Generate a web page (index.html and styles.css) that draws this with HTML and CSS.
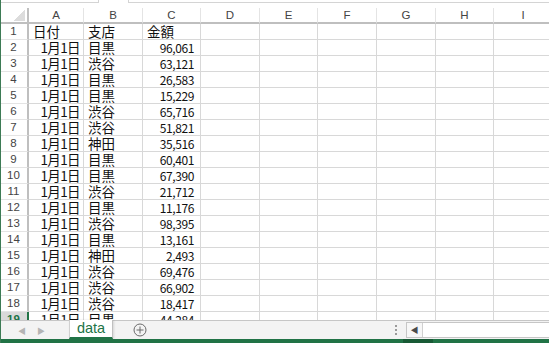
FILE: index.html
```html
<!DOCTYPE html>
<html lang="ja">
<head>
    <meta charset="UTF-8">
    <title>data - Excel</title>
    <link rel="stylesheet" href="styles.css">
</head>
<body>
    <div class="window">
        <div class="formula-strip">
            <div class="name-box"></div>
            <div class="fx-gap"></div>
            <div class="formula-box"></div>
        </div>
        <div class="sheet">
            <table class="grid">
                <colgroup>
                    <col class="c-row">
                    <col class="c-a">
                    <col class="c-b">
                    <col class="c-c">
                    <col class="c-d"><col class="c-e"><col class="c-f">
                    <col class="c-g"><col class="c-h"><col class="c-i">
                </colgroup>
                <thead>
                    <tr>
                        <th class="corner"></th>
                        <th>A</th><th>B</th><th>C</th><th>D</th><th>E</th>
                        <th>F</th><th>G</th><th>H</th><th>I</th>
                    </tr>
                </thead>
                <tbody>
                    <tr><th>1</th><td>日付</td><td>支店</td><td>金額</td><td></td><td></td><td></td><td></td><td></td><td></td></tr>
                    <tr><th>2</th><td class="date">1月1日</td><td>目黒</td><td class="num">96,061</td><td></td><td></td><td></td><td></td><td></td><td></td></tr>
                    <tr><th>3</th><td class="date">1月1日</td><td>渋谷</td><td class="num">63,121</td><td></td><td></td><td></td><td></td><td></td><td></td></tr>
                    <tr><th>4</th><td class="date">1月1日</td><td>目黒</td><td class="num">26,583</td><td></td><td></td><td></td><td></td><td></td><td></td></tr>
                    <tr><th>5</th><td class="date">1月1日</td><td>目黒</td><td class="num">15,229</td><td></td><td></td><td></td><td></td><td></td><td></td></tr>
                    <tr><th>6</th><td class="date">1月1日</td><td>渋谷</td><td class="num">65,716</td><td></td><td></td><td></td><td></td><td></td><td></td></tr>
                    <tr><th>7</th><td class="date">1月1日</td><td>渋谷</td><td class="num">51,821</td><td></td><td></td><td></td><td></td><td></td><td></td></tr>
                    <tr><th>8</th><td class="date">1月1日</td><td>神田</td><td class="num">35,516</td><td></td><td></td><td></td><td></td><td></td><td></td></tr>
                    <tr><th>9</th><td class="date">1月1日</td><td>目黒</td><td class="num">60,401</td><td></td><td></td><td></td><td></td><td></td><td></td></tr>
                    <tr><th>10</th><td class="date">1月1日</td><td>目黒</td><td class="num">67,390</td><td></td><td></td><td></td><td></td><td></td><td></td></tr>
                    <tr><th>11</th><td class="date">1月1日</td><td>渋谷</td><td class="num">21,712</td><td></td><td></td><td></td><td></td><td></td><td></td></tr>
                    <tr><th>12</th><td class="date">1月1日</td><td>目黒</td><td class="num">11,176</td><td></td><td></td><td></td><td></td><td></td><td></td></tr>
                    <tr><th>13</th><td class="date">1月1日</td><td>渋谷</td><td class="num">98,395</td><td></td><td></td><td></td><td></td><td></td><td></td></tr>
                    <tr><th>14</th><td class="date">1月1日</td><td>目黒</td><td class="num">13,161</td><td></td><td></td><td></td><td></td><td></td><td></td></tr>
                    <tr><th>15</th><td class="date">1月1日</td><td>神田</td><td class="num">2,493</td><td></td><td></td><td></td><td></td><td></td><td></td></tr>
                    <tr><th>16</th><td class="date">1月1日</td><td>渋谷</td><td class="num">69,476</td><td></td><td></td><td></td><td></td><td></td><td></td></tr>
                    <tr><th>17</th><td class="date">1月1日</td><td>渋谷</td><td class="num">66,902</td><td></td><td></td><td></td><td></td><td></td><td></td></tr>
                    <tr><th>18</th><td class="date">1月1日</td><td>渋谷</td><td class="num">18,417</td><td></td><td></td><td></td><td></td><td></td><td></td></tr>
                    <tr><th class="active">19</th><td class="date">1月1日</td><td>目黒</td><td class="num">44,284</td><td></td><td></td><td></td><td></td><td></td><td></td></tr>
                </tbody>
            </table>
        </div>
        <div class="tabbar">
            <div class="tab-nav">
                <span class="nav-arrow">&#9664;</span>
                <span class="nav-arrow">&#9654;</span>
            </div>
            <div class="sheet-tab">data</div>
            <div class="add-sheet">
                <svg width="14" height="14" viewBox="0 0 14 14">
                    <circle cx="7" cy="7" r="6" fill="none" stroke="#6a6a6a" stroke-width="1"/>
                    <path d="M7 3.5v7M3.5 7h7" stroke="#6a6a6a" stroke-width="1"/>
                </svg>
            </div>
            <div class="splitter">
                <span></span><span></span><span></span>
            </div>
            <div class="hscroll">
                <div class="scroll-left">&#9664;</div>
                <div class="scroll-track"></div>
            </div>
        </div>
        <div class="statusbar">
            <div class="status-mark"></div>
        </div>
    </div>
</body>
</html>
```

FILE: styles.css
```css
body {
    margin: 0;
    background-color: #fff;
    font-family: "Noto Sans CJK JP", "Liberation Sans", sans-serif;
}

.window {
    width: 549px;
    height: 343px;
    overflow: hidden;
    border-left: 1px solid #3d7b55;
    box-sizing: border-box;
}

/* bottom edge of the formula bar */
.formula-strip {
    height: 8px;
    display: flex;
    background-color: #fff;
}

.name-box {
    width: 97px;
    height: 2px;
    border-bottom: 1px solid #d4d4d4;
    border-right: 1px solid #d4d4d4;
}

.fx-gap {
    width: 29px;
}

.formula-box {
    flex: 1;
    height: 2px;
    border-bottom: 1px solid #d4d4d4;
    border-left: 1px solid #d4d4d4;
}

.sheet {
    height: 312px;
    overflow: hidden;
}

.grid {
    table-layout: fixed;
    border-collapse: separate;
    border-spacing: 0;
    width: 553px;
    margin-left: -1px;
    font-size: 13.5px;
    color: #111;
}

.c-row { width: 29px; }
.c-a { width: 55px; }
.c-b { width: 59px; }
.c-c { width: 58px; }
.c-d { width: 59px; }
.c-e { width: 58px; }
.c-f { width: 59px; }
.c-g { width: 59px; }
.c-h { width: 58px; }
.c-i { width: 59px; }

.grid th,
.grid td {
    height: 16px;
    padding: 0;
    box-sizing: border-box;
    border-right: 1px solid #d8d8d8;
    border-bottom: 1px solid #d8d8d8;
    line-height: 15px;
    white-space: nowrap;
}

.grid thead th {
    font-family: "Liberation Sans", sans-serif;
    font-size: 11.5px;
    font-weight: normal;
    color: #444;
    border-bottom: 2px solid #bfbfbf;
    border-right-color: #e4e4e4;
    line-height: 14px;
}

.grid tbody th {
    font-family: "Liberation Sans", sans-serif;
    font-size: 11.5px;
    font-weight: normal;
    color: #444;
    text-align: center;
    border-right: 2px solid #bfbfbf;
    border-bottom-color: #e4e4e4;
}

.grid thead th.corner {
    border-right: 2px solid #bfbfbf;
    background-image: linear-gradient(to bottom right, transparent 50%, #dcdcdc 50%);
    background-size: 11px 11px;
    background-position: right 2px bottom 1px;
    background-repeat: no-repeat;
}

.grid tbody th.active {
    color: #217346;
    font-weight: bold;
    background-color: #d9d9d9;
    border-right: 2px solid #217346;
}

.grid td {
    padding-left: 4px;
}

.grid td.date {
    text-align: right;
    padding-left: 0;
    padding-right: 3px;
    letter-spacing: -0.6px;
}

.grid td.num {
    font-size: 12px;
    text-align: right;
    padding-right: 6px;
    letter-spacing: -0.4px;
}

.tabbar {
    height: 19px;
    display: flex;
    align-items: stretch;
    background-color: #f3f3f3;
    border-top: 1px solid #c6c6c6;
    box-sizing: border-box;
}

.tab-nav {
    width: 68px;
    display: flex;
    align-items: center;
    padding-left: 17px;
    gap: 11px;
    box-sizing: border-box;
}

.nav-arrow {
    font-size: 8px;
    color: #b4b4b4;
}

.sheet-tab {
    width: 44px;
    margin-top: -1px;
    background-color: #fff;
    border-left: 1px solid #d0d0d0;
    border-right: 1px solid #c0c0c0;
    border-bottom: 2px solid #217346;
    box-shadow: 1px 0 2px rgba(0, 0, 0, 0.12);
    font-family: "Liberation Sans", sans-serif;
    font-size: 14.5px;
    color: #217346;
    text-align: center;
    line-height: 17px;
    box-sizing: border-box;
    height: 19px;
}

.add-sheet {
    width: 30px;
    margin-left: 20px;
    display: flex;
    align-items: center;
}

.splitter {
    margin-left: 228px;
    width: 10px;
    display: flex;
    flex-direction: column;
    justify-content: center;
    align-items: center;
    gap: 2px;
}

.splitter span {
    width: 2px;
    height: 2px;
    background-color: #9a9a9a;
}

.hscroll {
    flex: 1;
    display: flex;
    margin-left: 5px;
    margin-top: 1px;
    margin-bottom: 1px;
    border: 1px solid #c6c6c6;
    border-right: none;
    background-color: #fff;
}

.scroll-left {
    width: 15px;
    border-right: 1px solid #d0d0d0;
    background-color: #f7f7f7;
    font-size: 8px;
    color: #4a4a4a;
    text-align: center;
    line-height: 14px;
}

.scroll-track {
    flex: 1;
}

.statusbar {
    height: 4px;
    background-color: #217346;
    position: relative;
}

.status-mark {
    position: absolute;
    left: 402px;
    top: 0;
    width: 30px;
    height: 4px;
    background-color: #185a35;
}
```
